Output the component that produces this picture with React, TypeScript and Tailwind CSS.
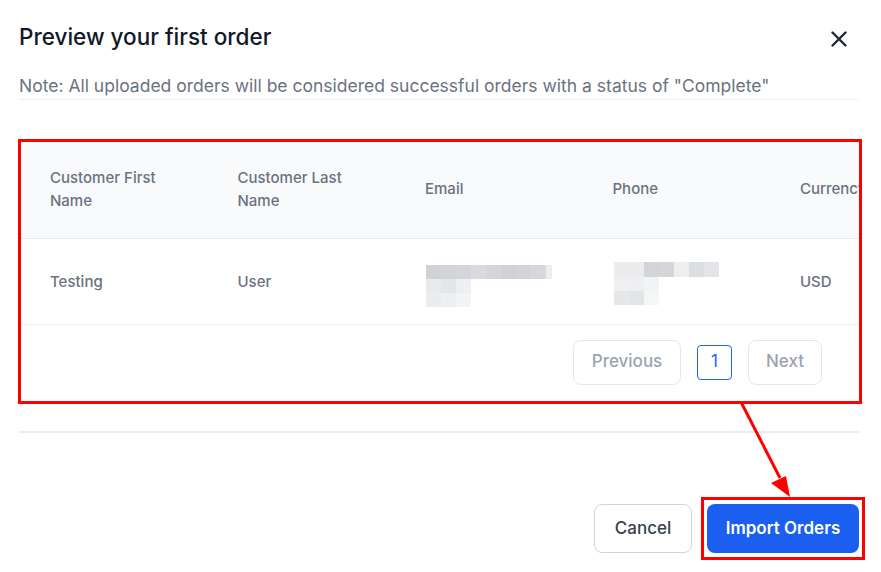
import React from "react";

const emailRows: string[][] = [
  ["bg-[#d0d2d6]", "bg-[#d2d4d8]", "bg-[#d4d6da]", "bg-[#d8dadd]", "bg-[#d4d6da]", "bg-[#d0d2d6]", "bg-[#d2d4d8]", "bg-[#d6d8dc]", "bg-[#eceef0]"],
  ["bg-[#e9eaed]", "bg-[#e4e5e8]", "bg-[#eeeff1]"],
  ["bg-[#ebecef]", "bg-[#eeeff1]", "bg-[#f3f4f6]"],
];
const phoneRows: string[][] = [
  ["bg-[#ececec]", "bg-[#eaecf0]", "bg-[#d2d4d8]", "bg-[#d4d6da]", "bg-[#eeeeee]", "bg-[#dcdfe2]", "bg-[#e2e4e7]"],
  ["bg-[#f0f0f1]", "bg-[#eeeff0]", "bg-[#f2f3f4]"],
  ["bg-[#e6e7e9]", "bg-[#e2e4e7]", "bg-[#f5f6f6]"],
];

function Pixels({ rows, firstH, lastW }: { rows: string[][]; firstH: string; lastW?: boolean }) {
  return (
    <div className="flex flex-col">
      {rows.map((r, i) => (
        <div key={i} className={`flex ${i === 0 ? firstH : "h-[14px]"}`}>
          {r.map((c, j) => (
            <div key={j} className={`${lastW && i === 0 && j === r.length - 1 ? "w-[6px]" : "w-[15px]"} h-full ${c}`} />
          ))}
        </div>
      ))}
    </div>
  );
}

export default function App() {
  const headers = [["Customer First", "Name"], ["Customer Last", "Name"], ["Email"], ["Phone"], ["Currency"]];
  return (
    <div className="relative w-[881px] h-[572px] bg-white overflow-hidden font-['Inter',sans-serif]">
      <div className="pl-[19px] pr-[22px]">
        <div className="flex items-start justify-between pt-[22px]">
          <h2 className="text-[22.5px] leading-[30px] font-medium text-[#111827]">Preview your first order</h2>
          <button className="mt-[9px] mr-[12px] w-[16px] h-[16px]">
            <svg width="16" height="16" viewBox="0 0 16 16">
              <path d="M1.5 1.5 L14.5 14.5 M14.5 1.5 L1.5 14.5" stroke="#1e293b" strokeWidth="2.4" strokeLinecap="round" />
            </svg>
          </button>
        </div>
        <p className="mt-[22px] text-[17.5px] leading-[24px] text-[#6b7280] pb-[1px] border-b border-[#eef1f3]">
          Note: All uploaded orders will be considered successful orders with a status of "Complete"
        </p>

        <div className="mt-[39px] -ml-px w-[844px] border-[3px] border-[#ff0000]">
          <div className="overflow-hidden rounded-br-[8px]">
            <div className="grid grid-cols-[187.5px_187.5px_187.5px_187.5px_187.5px] w-[937.5px] bg-[#f9fafb] h-[97px] border-b border-[#e8eaed] items-center">
              {headers.map((h, i) => (
                <div key={i} className={`pl-[29px] text-[15px] leading-[23px] text-[#6b7280] font-medium whitespace-nowrap ${h.length > 1 ? "pb-[2px]" : "pb-[4px]"}`}>
                  {h.map((l, j) => (
                    <div key={j}>{l}</div>
                  ))}
                </div>
              ))}
            </div>
            <div className="grid grid-cols-[187.5px_187.5px_187.5px_187.5px_187.5px] w-[937.5px] h-[86px] border-b border-[#eef0f3] items-center">
              <div className="pl-[29px] text-[15px] text-[#6b7280] font-medium pt-[2px]">Testing</div>
              <div className="pl-[29px] text-[15px] text-[#6b7280] font-medium pt-[2px]">User</div>
              <div className="pl-[30px] pt-[8px]">
                <Pixels rows={emailRows} firstH="h-[14px]" lastW />
              </div>
              <div className="pl-[30px] pt-[4px]">
                <Pixels rows={phoneRows} firstH="h-[15px]" />
              </div>
              <div className="pl-[29px] text-[15px] text-[#6b7280] font-medium pt-[2px]">USD</div>
            </div>
            <div className="h-[76px] flex items-center justify-end gap-[16px] pr-[37px] pb-[2px]">
              <button className="w-[108px] h-[45px] rounded-[8px] border border-[#e5e7eb] text-[17px] text-[#9ca3af] font-medium">Previous</button>
              <button className="w-[35px] h-[35px] rounded-[4px] border border-[#2563eb] text-[17px] text-[#2563eb]">1</button>
              <button className="w-[74px] h-[45px] rounded-[8px] border border-[#e5e7eb] text-[17px] text-[#9ca3af] font-medium">Next</button>
            </div>
          </div>
        </div>

        <div className="mt-[27px] h-[2px] bg-[#e9ebee]" />

        <div className="mt-[64px] flex justify-end items-center -mr-[6px]">
          <button className="w-[98px] h-[49px] rounded-[8px] border border-[#d1d5db] text-[17px] text-[#374151] font-medium bg-white">Cancel</button>
          <div className="ml-[9px] border-[3px] border-[#ff0000] px-[3px] py-[4px]">
            <button className="w-[152px] h-[49px] rounded-[8px] bg-[#1a5fef] text-white text-[17px] font-semibold">Import Orders</button>
          </div>
        </div>
      </div>

      <svg className="absolute left-0 top-0 pointer-events-none" width="881" height="572">
        <line x1="741" y1="402" x2="780" y2="478" stroke="#ff0000" strokeWidth="3" />
        <polygon points="790,497 771,483 786,476" fill="#ff0000" />
      </svg>
    </div>
  );
}
